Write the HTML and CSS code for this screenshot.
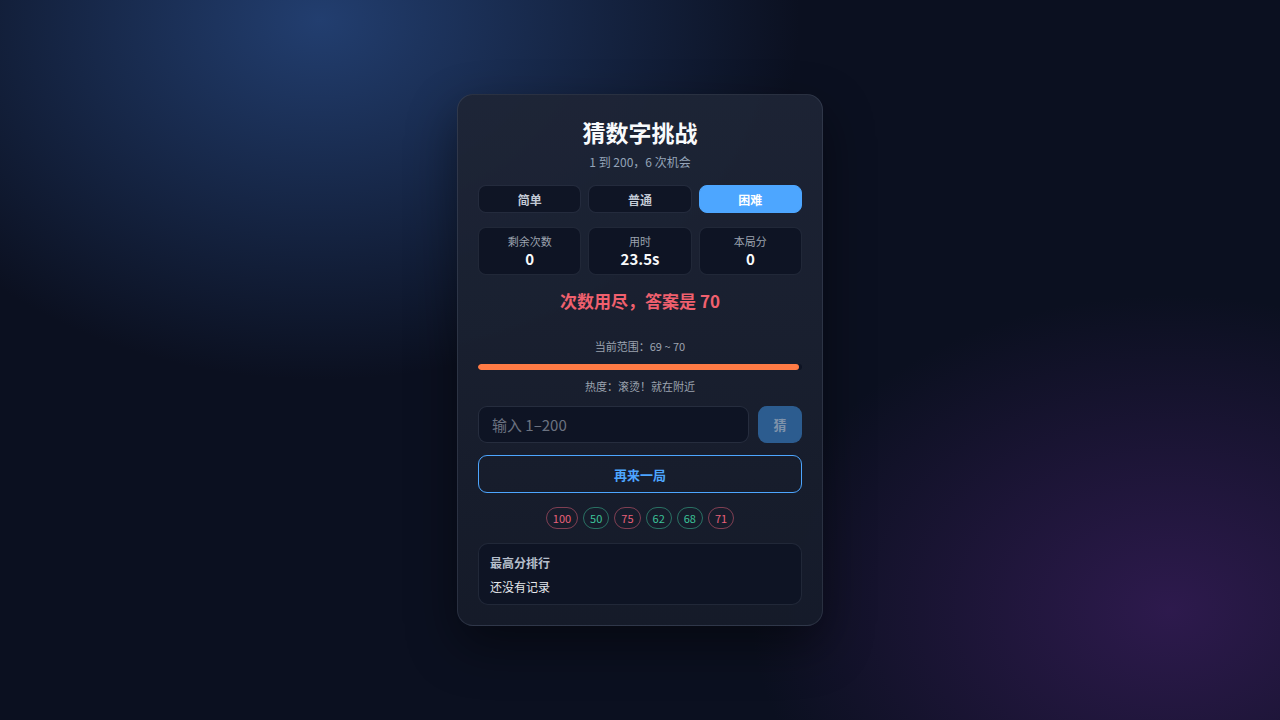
FILE: index.html
```html
<!DOCTYPE html>
<html lang="zh-CN">

<head>
    <meta charset="UTF-8">
    <meta name="viewport" content="width=device-width, initial-scale=1.0">
    <title>猜数字挑战</title>
    <link rel="stylesheet" href="styles.css">
</head>

<body>
    <div class="game-card">
        <h1 class="game-title">猜数字挑战</h1>
        <div class="game-sub">1 到 200，6 次机会</div>

        <div class="levels">
            <button class="level-btn">简单</button>
            <button class="level-btn">普通</button>
            <button class="level-btn active">困难</button>
        </div>

        <div class="stats">
            <div class="stat">
                <div class="stat-label">剩余次数</div>
                <div class="stat-value">0</div>
            </div>
            <div class="stat">
                <div class="stat-label">用时</div>
                <div class="stat-value">23.5s</div>
            </div>
            <div class="stat">
                <div class="stat-label">本局分</div>
                <div class="stat-value">0</div>
            </div>
        </div>

        <div class="result lose">次数用尽，答案是 70</div>

        <div class="range-text">当前范围：69 ~ 70</div>
        <div class="heat-track">
            <div class="heat-fill" style="width: 99%;"></div>
        </div>
        <div class="heat-text">热度：滚烫！就在附近</div>

        <div class="guess-row">
            <input class="guess-input" type="text" placeholder="输入 1–200" disabled>
            <button class="guess-btn" disabled>猜</button>
        </div>

        <button class="replay-btn">再来一局</button>

        <div class="history">
            <span class="chip high">100</span>
            <span class="chip low">50</span>
            <span class="chip high">75</span>
            <span class="chip low">62</span>
            <span class="chip low">68</span>
            <span class="chip high">71</span>
        </div>

        <div class="board">
            <div class="board-title">最高分排行</div>
            <div class="board-empty">还没有记录</div>
        </div>
    </div>
</body>

</html>
```

FILE: styles.css
```css
* {
    margin: 0;
    padding: 0;
    box-sizing: border-box;
}

body {
    height: 100vh;
    overflow: hidden;
    display: flex;
    justify-content: center;
    align-items: center;
    background:
        radial-gradient(ellipse 640px 480px at 320px 20px, rgba(38, 70, 125, 0.85), transparent 75%),
        radial-gradient(ellipse 560px 420px at 1170px 610px, rgba(60, 30, 96, 0.7), transparent 75%),
        #0b1020;
    font-family: "Noto Sans CJK SC", "Noto Sans", sans-serif;
    color: #e5e7eb;
}

.game-card {
    width: 366px;
    padding: 21px 20px 20px;
    background: linear-gradient(180deg, rgba(30, 37, 54, 0.95), rgba(22, 28, 42, 0.95));
    border: 1px solid rgba(148, 163, 184, 0.16);
    border-radius: 16px;
    box-shadow: 0 20px 50px rgba(0, 0, 0, 0.45);
    display: flex;
    flex-direction: column;
}

.game-title {
    text-align: center;
    font-size: 23px;
    font-weight: 700;
    color: #f8fafc;
    line-height: 32px;
}

.game-sub {
    text-align: center;
    font-size: 12px;
    color: #94a3b8;
    line-height: 20px;
    margin-top: 4px;
}

.levels,
.stats {
    display: grid;
    grid-template-columns: repeat(3, 1fr);
    gap: 7px;
}

.levels {
    margin-top: 13px;
}

.level-btn {
    height: 28px;
    border-radius: 8px;
    border: 1px solid rgba(148, 163, 184, 0.16);
    background: #0f1525;
    color: #c3cad6;
    font-family: inherit;
    font-size: 12px;
    font-weight: 700;
}

.level-btn.active {
    background: #4da6ff;
    border-color: #4da6ff;
    color: #fff;
}

.stats {
    margin-top: 14px;
}

.stat {
    height: 48px;
    border-radius: 8px;
    border: 1px solid rgba(148, 163, 184, 0.14);
    background: #0e1424;
    text-align: center;
    padding-top: 5px;
}

.stat-label {
    font-size: 11px;
    color: #9ca3af;
    line-height: 16px;
}

.stat-value {
    font-size: 15px;
    font-weight: 700;
    color: #f8fafc;
    line-height: 20px;
}

.result {
    text-align: center;
    font-size: 17px;
    font-weight: 700;
    line-height: 26px;
    margin-top: 13px;
}

.result.lose {
    color: #f0606e;
}

.range-text,
.heat-text {
    text-align: center;
    font-size: 11px;
    color: #9ca3af;
    line-height: 18px;
}

.range-text {
    margin-top: 23px;
}

.heat-track {
    height: 6px;
    margin-top: 9px;
    border-radius: 3px;
    background: #0e1424;
    overflow: hidden;
}

.heat-fill {
    height: 100%;
    border-radius: 3px;
    background: #ff7b45;
}

.heat-text {
    margin-top: 7px;
}

.guess-row {
    display: flex;
    gap: 9px;
    margin-top: 11px;
}

.guess-input {
    flex: 1;
    height: 37px;
    border-radius: 9px;
    border: 1px solid rgba(148, 163, 184, 0.18);
    background: #0e1424;
    color: #e5e7eb;
    padding: 0 13px;
    font-family: inherit;
    font-size: 15px;
}

.guess-input::placeholder {
    color: #6b7280;
}

.guess-btn {
    width: 44px;
    height: 37px;
    border: none;
    border-radius: 9px;
    background: #2c5c8f;
    color: #7f93ab;
    font-family: inherit;
    font-size: 13px;
    font-weight: 700;
}

.replay-btn {
    height: 38px;
    margin-top: 12px;
    border-radius: 9px;
    border: 1px solid #4da6ff;
    background: transparent;
    color: #4da6ff;
    font-family: inherit;
    font-size: 13px;
    font-weight: 700;
}

.history {
    display: flex;
    justify-content: center;
    gap: 5px;
    margin-top: 14px;
}

.chip {
    height: 22px;
    padding: 0 6px;
    border-radius: 11px;
    font-size: 11px;
    line-height: 20px;
    border: 1px solid;
}

.chip.high {
    color: #e8617a;
    border-color: rgba(232, 97, 122, 0.5);
}

.chip.low {
    color: #3cc49a;
    border-color: rgba(60, 196, 154, 0.5);
}

.board {
    margin-top: 14px;
    border-radius: 10px;
    border: 1px solid rgba(148, 163, 184, 0.14);
    background: #0e1424;
    padding: 10px 11px 8px;
}

.board-title {
    font-size: 12px;
    font-weight: 700;
    color: #b6bfcc;
    line-height: 18px;
}

.board-empty {
    font-size: 12px;
    color: #e5e7eb;
    line-height: 18px;
    margin-top: 6px;
}
```
